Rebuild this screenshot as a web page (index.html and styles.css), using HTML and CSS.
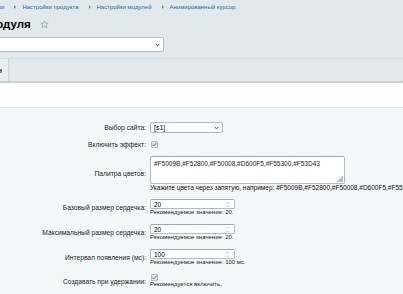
FILE: index.html
```html
<!DOCTYPE html>
<html lang="ru">
<head>
  <meta charset="UTF-8">
  <meta name="viewport" content="width=device-width, initial-scale=1.0">
  <title>Настройки модуля</title>
  <link rel="stylesheet" href="styles.css">
</head>
<body>
  <div class="header">
    <div class="crumbs">
      <a class="crumb first">Настройки</a><span class="sep"></span>
      <a class="crumb">Настройки продукта</a><span class="sep"></span>
      <a class="crumb">Настройки модулей</a><span class="sep"></span>
      <a class="crumb">Анимированный курсор</a>
    </div>
    <h1 class="title">
      <span class="title-text">Настройки модуля</span>
      <svg class="star" width="9" height="9" viewBox="0 0 10 10"><path d="M5 .8l1.2 2.7 2.9.3-2.2 1.9.7 2.9L5 7.1 2.4 8.6l.7-2.9L.9 3.8l2.9-.3z" fill="none" stroke="#9aa7ae" stroke-width=".9" stroke-linejoin="round"/></svg>
    </h1>
    <div class="module-select">
      <span>Анимированный курсор</span>
      <svg width="5" height="4" viewBox="0 0 5 4"><path d="M.7 1l1.8 1.8L4.3 1" fill="none" stroke="#333" stroke-width=".9"/></svg>
    </div>
    <div class="tabs">
      <div class="tab">Дизайн</div>
    </div>
  </div>

  <div class="spacer"></div>

  <div class="form">
    <div class="row">
      <div class="label">Выбор сайта:</div>
      <div class="field">
        <div class="select">
          <span>[s1]</span>
          <svg width="5" height="4" viewBox="0 0 5 4"><path d="M.7 1l1.8 1.8L4.3 1" fill="none" stroke="#333" stroke-width=".9"/></svg>
        </div>
      </div>
    </div>

    <div class="row">
      <div class="label">Включить эффект:</div>
      <div class="field">
        <span class="check"><svg width="7" height="7" viewBox="0 0 7 7"><path d="M1.3 3.6l1.4 1.4 3-3.4" fill="none" stroke="#6d7b83" stroke-width="1"/></svg></span>
      </div>
    </div>

    <div class="row">
      <div class="label">Палитра цветов:</div>
      <div class="field">
        <div class="textarea">#F5009B,#F52800,#F50008,#D600F5,#F55300,#F53D43<span class="grip"></span></div>
        <div class="note">Укажите цвета через запятую, например: #F5009B,#F52800,#F50008,#D600F5,#F55300,#F53D43</div>
      </div>
    </div>

    <div class="row">
      <div class="label">Базовый размер сердечка:</div>
      <div class="field">
        <div class="number"><span>20</span><svg class="spin" width="5" height="7" viewBox="0 0 5 7"><path d="M1 2.6l1.5-1.5L4 2.6M1 4.4l1.5 1.5L4 4.4" fill="none" stroke="#a3adb2" stroke-width=".7"/></svg></div>
        <div class="hint">Рекомендуемое значение: 20.</div>
      </div>
    </div>

    <div class="row">
      <div class="label">Максимальный размер сердечка:</div>
      <div class="field">
        <div class="number"><span>20</span><svg class="spin" width="5" height="7" viewBox="0 0 5 7"><path d="M1 2.6l1.5-1.5L4 2.6M1 4.4l1.5 1.5L4 4.4" fill="none" stroke="#a3adb2" stroke-width=".7"/></svg></div>
        <div class="hint">Рекомендуемое значение: 20.</div>
      </div>
    </div>

    <div class="row">
      <div class="label">Интервал появления (мс):</div>
      <div class="field">
        <div class="number"><span>100</span><svg class="spin" width="5" height="7" viewBox="0 0 5 7"><path d="M1 2.6l1.5-1.5L4 2.6M1 4.4l1.5 1.5L4 4.4" fill="none" stroke="#a3adb2" stroke-width=".7"/></svg></div>
        <div class="hint">Рекомендуемое значение: 100 мс.</div>
      </div>
    </div>

    <div class="row">
      <div class="label">Создавать при удержании:</div>
      <div class="field">
        <span class="check"><svg width="7" height="7" viewBox="0 0 7 7"><path d="M1.3 3.6l1.4 1.4 3-3.4" fill="none" stroke="#6d7b83" stroke-width="1"/></svg></span>
        <div class="hint">Рекомендуется включить.</div>
      </div>
    </div>
  </div>
</body>
</html>
```

FILE: styles.css
```css
html, body { margin: 0; padding: 0; }
body { width: 403px; height: 294px; overflow: hidden; background: #f4f7f8; font-family: "Liberation Sans", Arial, sans-serif; color: #000; }

.header { background: #e2e9ec; padding-top: 2px; overflow: hidden; }
.crumbs { display: flex; align-items: center; height: 9px; font-size: 6px; white-space: nowrap; }
.crumb { color: #2f65a0; }
.crumb.first { margin-left: -25px; }
.sep { width: 0; height: 0; border-left: 2.5px solid #7d8e99; border-top: 2px solid transparent; border-bottom: 2px solid transparent; margin: 0 6px 0 10px; }

.title { display: flex; align-items: center; margin: 6px 0 0; height: 14px; font-size: 11.5px; font-weight: bold; white-space: nowrap; }
.title-text { margin-left: -76px; }
.star { margin-left: 9px; }

.module-select { display: flex; align-items: center; justify-content: space-between; box-sizing: border-box; width: 415px; height: 15px; margin: 6px 0 0 -251px; padding: 0 3px 0 5px; background: #fff; border: 1px solid #b5bfc3; border-radius: 2px; font-size: 7px; }

.tabs { display: flex; height: 22px; margin-top: 6px; border-top: 1px solid #d6dee1; border-bottom: 2px solid #c6cfd3; }
.tab { display: flex; align-items: center; margin-left: -27px; padding: 0 6px 0 4px; background: #e9eef0; border-right: 1px solid #c9d2d6; font-size: 7px; font-weight: bold; color: #222; }

.spacer { height: 24px; background: #fff; border-bottom: 1px solid #dfe6e8; }

.form { padding-top: 10px; font-size: 6.7px; }
.row { display: grid; grid-template-columns: 150px 1fr; padding: 4px 0; }
.label { align-self: center; text-align: right; padding-right: 4px; white-space: nowrap; color: #1c1c1c; }
.field { min-width: 0; white-space: nowrap; }

.select { display: flex; align-items: center; justify-content: space-between; box-sizing: border-box; width: 73px; height: 11px; padding: 0 3px 0 3px; background: #fff; border: 1px solid #aeb8bd; border-radius: 2px; font-size: 7px; }

.check { display: flex; align-items: center; justify-content: center; box-sizing: border-box; width: 7px; height: 7px; margin-left: 1px; background: #dfe6e9; border: 1px solid #b3bec3; border-radius: 1px; }
.check svg { flex: none; }

.textarea { position: relative; box-sizing: border-box; width: 195px; height: 28px; padding: 3px 3px; background: #fff; border: 1px solid #b3bcc1; border-top-color: #9ea9af; border-radius: 2px; font-size: 6.5px; color: #222; }
.grip { position: absolute; right: 1px; bottom: 1px; width: 6px; height: 6px; background: linear-gradient(135deg, transparent 50%, #b9c2c6 50%); }
.note { line-height: 7px; font-size: 6.5px; color: #111; }

.number { display: flex; align-items: center; justify-content: space-between; box-sizing: border-box; width: 85px; height: 10px; padding: 0 4px 0 3px; background: #fff; border: 1px solid #b3bcc1; border-top-color: #9ea9af; border-radius: 2px; font-size: 6.5px; }
.hint { line-height: 7px; font-size: 6px; color: #222; }
```
